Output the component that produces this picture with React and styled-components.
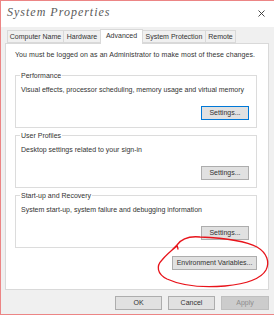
import React from 'react'
import styled, { createGlobalStyle } from 'styled-components'

const GlobalStyle = createGlobalStyle`
  body {
    margin: 0;
    background: #ffffff;
    font-family: "Liberation Sans", Arial, sans-serif;
  }
`

const tabs = [
  { label: 'Computer Name', w: 57 },
  { label: 'Hardware', w: 38 },
  { label: 'Advanced', w: 43, active: true },
  { label: 'System Protection', w: 64 },
  { label: 'Remote', w: 31 },
]

const groups = [
  { title: 'Performance', text: 'Visual effects, processor scheduling, memory usage and virtual memory', focused: true },
  { title: 'User Profiles', text: 'Desktop settings related to your sign-in' },
  { title: 'Start-up and Recovery', text: 'System start-up, system failure and debugging information' },
]

function App() {
  return (
    <>
      <GlobalStyle />
      <Window>
        <TitleBar>
          <Title>System Properties</Title>
          <svg width="7" height="7" viewBox="0 0 7 7">
            <path d="M0.5 0.5 L6.5 6.5 M6.5 0.5 L0.5 6.5" stroke="#333" strokeWidth="0.9" fill="none" />
          </svg>
        </TitleBar>
        <Body>
          <TabRow>
            {tabs.map(t => (
              <Tab key={t.label} $w={t.w} $active={t.active}>{t.label}</Tab>
            ))}
          </TabRow>
          <Panel>
            <Intro>You must be logged on as an Administrator to make most of these changes.</Intro>
            {groups.map(g => (
              <Group key={g.title}>
                <Legend>{g.title}</Legend>
                <Desc>{g.text}</Desc>
                <GroupFoot>
                  <Button $w={48} $focused={g.focused}>Settings...</Button>
                </GroupFoot>
              </Group>
            ))}
            <EnvRow>
              <Button $w={85}>Environment Variables...</Button>
            </EnvRow>
          </Panel>
          <DialogButtons>
            <Button $w={47}>OK</Button>
            <Button $w={47}>Cancel</Button>
            <Button $w={48} disabled>Apply</Button>
          </DialogButtons>
        </Body>
        <Scribble width="274" height="320" viewBox="0 0 274 320">
          <path
            d="M172,250 L177,245 L178,249 M177,246 C172,250 166,255 162,260 C156,266 157,274 167,279 C180,285 200,288 225,286 C245,284 261,279 266,270 C270,262 267,253 257,247 C244,240 222,238 200,237 C190,236 182,238 177,245"
            stroke="#e8141b"
            strokeWidth="1.3"
            fill="none"
            strokeLinecap="round"
            strokeLinejoin="round"
          />
        </Scribble>
      </Window>
    </>
  )
}

export default App

const Window = styled.div`
  position: relative;
  width: 274px;
  height: 315px;
  box-sizing: border-box;
  border: 1px solid #ec8585;
  border-right: none;
  background: #f0f0f0;
  display: flex;
  flex-direction: column;
`

const TitleBar = styled.div`
  height: 26px;
  background: #ffffff;
  display: flex;
  align-items: center;
  justify-content: space-between;
  padding: 0 9px 0 6px;
  svg {
    margin-top: -2px;
  }
`

const Title = styled.div`
  font-family: "Liberation Serif", serif;
  font-style: italic;
  font-size: 12px;
  letter-spacing: 1px;
  color: #5a5a5a;
  margin-top: -3px;
`

const Body = styled.div`
  flex: 1;
  padding: 3px 5px 0 4px;
  display: flex;
  flex-direction: column;
`

const TabRow = styled.div`
  display: flex;
  align-items: flex-end;
  height: 13px;
  padding-left: 2px;
  position: relative;
  z-index: 1;
`

const Tab = styled.div`
  width: ${p => p.$w}px;
  height: ${p => (p.$active ? 15 : 13)}px;
  box-sizing: border-box;
  margin-left: -1px;
  margin-bottom: ${p => (p.$active ? -1 : 0)}px;
  border: 1px solid #d9d9d9;
  border-bottom: ${p => (p.$active ? 'none' : '1px solid #d9d9d9')};
  background: ${p => (p.$active ? '#ffffff' : '#f0f0f0')};
  font-size: 7px;
  line-height: 11px;
  color: #333;
  text-align: center;
  white-space: nowrap;
  &:first-child {
    margin-left: 0;
  }
`

const Panel = styled.div`
  height: 247px;
  box-sizing: border-box;
  background: #ffffff;
  border: 1px solid #d9d9d9;
  padding: 6px 11px 0 9px;
  display: flex;
  flex-direction: column;
`

const Intro = styled.div`
  font-size: 7px;
  line-height: 9px;
  letter-spacing: 0.08px;
  color: #333;
  white-space: nowrap;
  margin-bottom: 12px;
`

const Group = styled.fieldset`
  margin: 0 0 3px 0;
  padding: 5px 7px 7px 5px;
  border: 1px solid #dcdcdc;
  min-width: 0;
`

const Legend = styled.legend`
  font-size: 7px;
  line-height: 9px;
  color: #333;
  padding: 0 1px;
  margin-left: -1px;
`

const Desc = styled.div`
  font-size: 7px;
  line-height: 9px;
  color: #333;
  white-space: nowrap;
`

const GroupFoot = styled.div`
  display: flex;
  justify-content: flex-end;
  margin-top: 12px;
`

const EnvRow = styled.div`
  display: flex;
  justify-content: flex-end;
  margin-top: 5px;
`

const Button = styled.button`
  width: ${p => p.$w}px;
  height: 14px;
  box-sizing: border-box;
  padding: 0;
  font-family: "Liberation Sans", Arial, sans-serif;
  font-size: 7px;
  line-height: 12px;
  color: ${p => (p.disabled ? '#8d8d8d' : '#333')};
  background: ${p => (p.disabled ? '#cccccc' : '#e1e1e1')};
  border: 1px solid ${p => (p.disabled ? '#bfbfbf' : p.$focused ? '#0078d7' : '#adadad')};
  white-space: nowrap;
`

const DialogButtons = styled.div`
  display: flex;
  justify-content: flex-end;
  gap: 6px;
  padding-top: 6px;
  padding-right: 0;
`

const Scribble = styled.svg`
  position: absolute;
  top: -1px;
  left: -1px;
  pointer-events: none;
`
